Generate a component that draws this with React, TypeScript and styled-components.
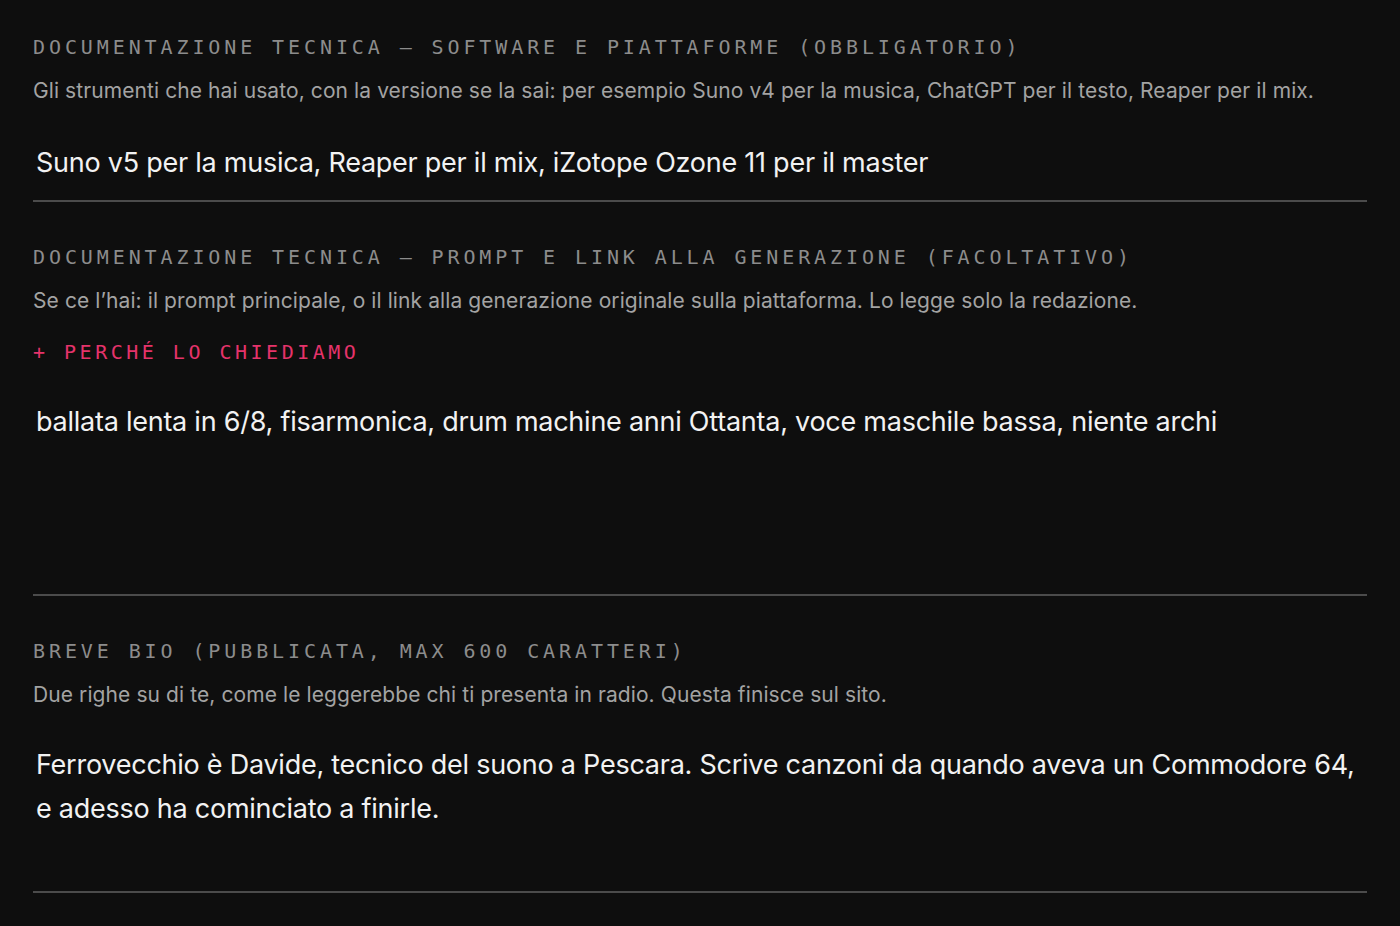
import * as React from "react";
import styled, { createGlobalStyle } from "styled-components";

const GlobalStyle = createGlobalStyle`
    html, body {
        margin: 0;
        padding: 0;
        background: #0e0e0e;
    }
    body {
        font-family: Inter, "Noto Sans", sans-serif;
        color: #f2f2f2;
    }
`;

const Page = styled.div`
    display: flex;
    flex-direction: column;
    padding: 0 33px;
    min-height: 926px;
    box-sizing: border-box;
`;

const Field = styled.div`
    display: flex;
    flex-direction: column;
    padding-top: 45px;
    border-bottom: 2px solid #4b4b4b;
    &:first-child {
        padding-top: 37px;
    }
`;

const Label = styled.div`
    font-family: "DejaVu Sans Mono", "Liberation Mono", monospace;
    font-size: 20px;
    line-height: 20px;
    letter-spacing: 3.9px;
    color: #8c8c8c;
    white-space: nowrap;
`;

const Hint = styled.div`
    margin-top: 18px;
    font-size: 21px;
    line-height: 32px;
    letter-spacing: 0.09px;
    color: #a3a3a3;
`;

const Toggle = styled.button`
    align-self: flex-start;
    margin-top: 25px;
    padding: 0;
    border: none;
    background: none;
    cursor: pointer;
    font-family: "DejaVu Sans Mono", "Liberation Mono", monospace;
    font-size: 20px;
    line-height: 20px;
    letter-spacing: 3.5px;
    color: #e5336b;
`;

const ValueInput = styled.input<{ $gap?: number }>`
    margin-top: ${(p) => p.$gap ?? 17}px;
    padding: 16px 3px;
    border: none;
    outline: none;
    background: transparent;
    font-family: Inter, "Noto Sans", sans-serif;
    font-size: 27px;
    line-height: 44px;
    height: 76px;
    box-sizing: border-box;
    letter-spacing: -0.25px;
    color: #f2f2f2;
`;

const ValueArea = styled.textarea<{ $gap?: number; $height: number }>`
    margin-top: ${(p) => p.$gap ?? 17}px;
    padding: 16px 3px;
    height: ${(p) => p.$height}px;
    box-sizing: border-box;
    border: none;
    outline: none;
    resize: none;
    background: transparent;
    font-family: Inter, "Noto Sans", sans-serif;
    font-size: 27px;
    line-height: 44px;
    letter-spacing: -0.25px;
    color: #f2f2f2;
    overflow: hidden;
`;

export default function App() {
    const [software, setSoftware] = React.useState(
        "Suno v5 per la musica, Reaper per il mix, iZotope Ozone 11 per il master"
    );
    const [prompt, setPrompt] = React.useState(
        "ballata lenta in 6/8, fisarmonica, drum machine anni Ottanta, voce maschile bassa, niente archi"
    );
    const [bio, setBio] = React.useState(
        "Ferrovecchio è Davide, tecnico del suono a Pescara. Scrive canzoni da quando aveva un Commodore 64, e adesso ha cominciato a finirle."
    );

    return (
        <>
            <GlobalStyle />
            <Page>
                <Field>
                    <Label>DOCUMENTAZIONE TECNICA — SOFTWARE E PIATTAFORME (OBBLIGATORIO)</Label>
                    <Hint>
                        Gli strumenti che hai usato, con la versione se la sai: per esempio Suno v4 per la musica,
                        ChatGPT per il testo, Reaper per il mix.
                    </Hint>
                    <ValueInput value={software} onChange={(e) => setSoftware(e.target.value)} />
                </Field>
                <Field>
                    <Label>DOCUMENTAZIONE TECNICA — PROMPT E LINK ALLA GENERAZIONE (FACOLTATIVO)</Label>
                    <Hint>
                        Se ce l’hai: il prompt principale, o il link alla generazione originale sulla piattaforma.
                        Lo legge solo la redazione.
                    </Hint>
                    <Toggle type="button">+ PERCHÉ LO CHIEDIAMO</Toggle>
                    <ValueArea $gap={22} $height={210} value={prompt} onChange={(e) => setPrompt(e.target.value)} />
                </Field>
                <Field>
                    <Label>BREVE BIO (PUBBLICATA, MAX 600 CARATTERI)</Label>
                    <Hint>Due righe su di te, come le leggerebbe chi ti presenta in radio. Questa finisce sul sito.</Hint>
                    <ValueArea $gap={16} $height={164} value={bio} onChange={(e) => setBio(e.target.value)} />
                </Field>
            </Page>
        </>
    );
}
